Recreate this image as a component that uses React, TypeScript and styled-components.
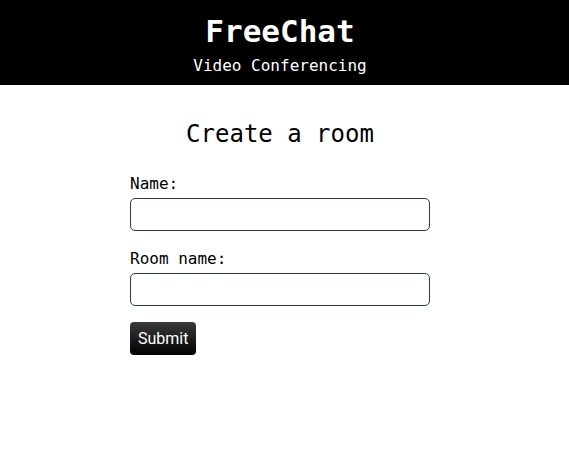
import React from "react";
import styled, { createGlobalStyle } from "styled-components";

const Global = createGlobalStyle`
  html, body { margin: 0; padding: 0; background: #fff; }
  body { font-family: "DejaVu Sans Mono", "Liberation Mono", monospace; color: #000; }
  * { box-sizing: border-box; }
`;

const Header = styled.header`
  background: #000;
  color: #fff;
  height: 85px;
  padding-right: 9px;
  display: flex;
  flex-direction: column;
  align-items: center;
`;

const Title = styled.h1`
  margin: 12px 0 0;
  font-size: 31px;
  line-height: 38px;
  font-weight: bold;
  letter-spacing: 0;
`;

const Subtitle = styled.div`
  margin-top: 6px;
  font-size: 16px;
  line-height: 20px;
`;

const Main = styled.main`
  width: 300px;
  margin: 0 auto;
  position: relative;
  left: -4.5px;
  display: flex;
  flex-direction: column;
`;

const Heading = styled.h2`
  margin: 34px 0 0;
  font-size: 24px;
  line-height: 30px;
  font-weight: normal;
  text-align: center;
`;

const Form = styled.form`
  display: flex;
  flex-direction: column;
  margin-top: 25px;
`;

const Label = styled.label`
  font-size: 16px;
  line-height: 20px;
  margin-bottom: 4px;
`;

const Input = styled.input`
  width: 300px;
  height: 33px;
  border: 1px solid #2c3e50;
  border-radius: 5px;
  margin-bottom: 18px;
  font-size: 16px;
  padding: 0 8px;
`;

const Button = styled.button`
  align-self: flex-start;
  height: 33px;
  padding: 0 8px;
  border: none;
  border-radius: 4px;
  background: linear-gradient(#3a3a3a, #000);
  color: #fff;
  font-family: Roboto, "Liberation Sans", sans-serif;
  font-size: 16px;
  margin-top: -2px;
`;

export default function App() {
  return (
    <>
      <Global />
      <Header>
        <Title>FreeChat</Title>
        <Subtitle>Video Conferencing</Subtitle>
      </Header>
      <Main>
        <Heading>Create a room</Heading>
        <Form onSubmit={(e) => e.preventDefault()}>
          <Label htmlFor="name">Name:</Label>
          <Input id="name" type="text" />
          <Label htmlFor="room">Room name:</Label>
          <Input id="room" type="text" />
          <Button type="submit">Submit</Button>
        </Form>
      </Main>
    </>
  );
}
